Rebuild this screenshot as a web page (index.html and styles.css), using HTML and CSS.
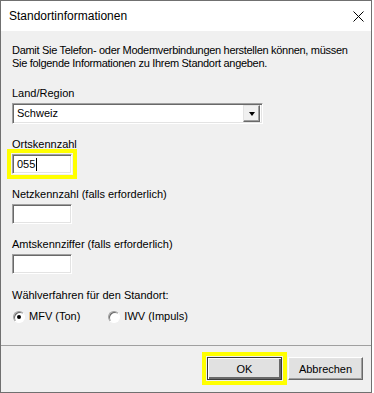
FILE: index.html
```html
<!DOCTYPE html>
<html lang="de">
<head>
    <meta charset="UTF-8">
    <title>Standortinformationen</title>
    <link rel="stylesheet" href="styles.css">
</head>
<body>

    <div class="dialog">

        <header class="dialog-title">
            <span>Standortinformationen</span>
            <svg class="close-icon" width="11" height="11" viewBox="0 0 11 11">
                <path d="M0.5 0.5 L10.5 10.5 M10.5 0.5 L0.5 10.5" stroke="#000" stroke-width="1" fill="none"/>
            </svg>
        </header>

        <main class="dialog-body">
            <p class="intro">Damit Sie Telefon- oder Modemverbindungen herstellen können, müssen<br>Sie folgende Informationen zu Ihrem Standort angeben.</p>

            <div class="field field-first">
                <label>Land/Region</label>
                <div class="combo">
                    <span class="combo-value">Schweiz</span>
                    <span class="combo-button"><span class="arrow"></span></span>
                </div>
            </div>

            <div class="field">
                <label>Ortskennzahl</label>
                <div class="textbox highlight"><span>055</span><span class="caret"></span></div>
            </div>

            <div class="field">
                <label>Netzkennzahl (falls erforderlich)</label>
                <div class="textbox"></div>
            </div>

            <div class="field">
                <label>Amtskennziffer (falls erforderlich)</label>
                <div class="textbox"></div>
            </div>

            <div class="field field-dial">
                <label>Wählverfahren für den Standort:</label>
                <div class="radio-row">
                    <span class="radio checked"></span><span class="radio-label">MFV (Ton)</span>
                    <span class="radio"></span><span class="radio-label">IWV (Impuls)</span>
                </div>
            </div>
        </main>

        <footer class="dialog-footer">
            <button class="btn btn-default highlight">OK</button>
            <button class="btn">Abbrechen</button>
        </footer>

    </div>

</body>
</html>
```

FILE: styles.css
```css
/* Classic Windows dialog look */
:root {
    --face: #f0f0f0;
    --shadow: #a0a0a0;
    --dark-shadow: #696969;
    --light: #e3e3e3;
    --highlight: #ffff00;
}

* {
    margin: 0;
    padding: 0;
    box-sizing: border-box;
}

body {
    background: #ffffff;
    font-family: 'Liberation Sans', Arial, sans-serif;
    font-size: 11px;
    line-height: 13px;
    color: #000000;
}

.dialog {
    width: 372px;
    height: 393px;
    border: 1px solid #707070;
    display: flex;
    flex-direction: column;
    background: var(--face);
}

/* Title bar */
.dialog-title {
    height: 30px;
    flex-shrink: 0;
    background: #ffffff;
    display: flex;
    align-items: center;
    justify-content: space-between;
    padding: 0 7px 0 8px;
    font-family: 'Liberation Sans', sans-serif;
    font-size: 12px;
}

/* Body */
.dialog-body {
    flex-grow: 1;
    padding: 13px 11px 0;
}

.intro {
    white-space: nowrap;
    letter-spacing: -0.3px;
}

.field {
    margin-top: 14px;
}

.field-first {
    margin-top: 17px;
}

.field-dial {
    margin-top: 15px;
}

.field label {
    display: block;
    margin-bottom: 3px;
}

/* Sunken edit box */
.textbox,
.combo {
    background: #ffffff;
    border: 1px solid;
    border-color: var(--shadow) #ffffff #ffffff var(--shadow);
    box-shadow: inset 1px 1px 0 var(--dark-shadow), inset -1px -1px 0 var(--light);
}

.textbox {
    width: 60px;
    height: 20px;
    display: flex;
    align-items: center;
    padding-left: 4px;
}

.caret {
    width: 1px;
    height: 13px;
    background: #000;
    margin-left: 1px;
}

.combo {
    width: 251px;
    height: 21px;
    display: flex;
    align-items: center;
    justify-content: space-between;
    padding: 2px;
}

.combo-value {
    padding-left: 2px;
}

.combo-button {
    width: 17px;
    height: 17px;
    background: var(--face);
    border: 1px solid;
    border-color: var(--light) var(--dark-shadow) var(--dark-shadow) var(--light);
    box-shadow: inset -1px -1px 0 var(--shadow);
    display: flex;
    align-items: center;
    justify-content: center;
}

.arrow {
    width: 0;
    height: 0;
    border-left: 3.5px solid transparent;
    border-right: 3.5px solid transparent;
    border-top: 4px solid #000;
    margin-top: 1px;
}

/* Radio buttons */
.radio-row {
    display: flex;
    align-items: center;
    margin-top: 8px;
    padding-left: 1px;
}

.radio {
    width: 12px;
    height: 12px;
    border-radius: 50%;
    background: #ffffff;
    border: 1px solid;
    border-color: var(--shadow) #ffffff #ffffff var(--shadow);
    box-shadow: inset 1px 1px 0 var(--dark-shadow);
    display: flex;
    align-items: center;
    justify-content: center;
}

.radio.checked::after {
    content: '';
    width: 4px;
    height: 4px;
    border-radius: 50%;
    background: #000;
}

.radio-label {
    margin-left: 4px;
    margin-right: 28px;
}

/* Footer with buttons */
.dialog-footer {
    height: 47px;
    flex-shrink: 0;
    border-top: 1px solid var(--shadow);
    display: flex;
    justify-content: flex-end;
    align-items: flex-start;
    gap: 6px;
    padding: 11px 8px 0 0;
}

.btn {
    width: 75px;
    height: 23px;
    font-family: inherit;
    font-size: 11px;
    background: #e1e1e1;
    border: 1px solid;
    border-color: #ffffff var(--dark-shadow) var(--dark-shadow) #ffffff;
    box-shadow: inset -1px -1px 0 var(--shadow), inset 1px 1px 0 var(--light);
    color: #000;
}

.btn-default {
    border: 1px solid #3c3c3c;
    box-shadow: inset 1px 1px 0 #ffffff, inset -2px -2px 0 var(--dark-shadow), inset 2px 2px 0 var(--light);
}

/* Yellow marker boxes */
.highlight {
    outline: 4px solid var(--highlight);
    outline-offset: 1px;
}
```
